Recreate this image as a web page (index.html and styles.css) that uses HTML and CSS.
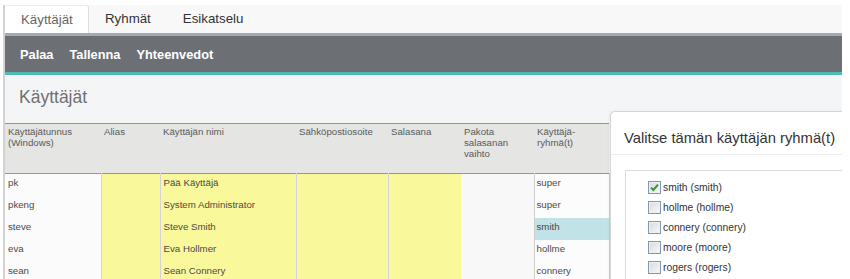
FILE: index.html
```html
<!DOCTYPE html>
<html lang="fi">
<head>
<meta charset="utf-8">
<title>Käyttäjät</title>
<link rel="stylesheet" href="styles.css">
</head>
<body>
<div class="frame">
  <div class="tabs">
    <div class="tab active">Käyttäjät</div>
    <div class="tab">Ryhmät</div>
    <div class="tab">Esikatselu</div>
  </div>
  <div class="toolbar">
    <span class="tool">Palaa</span>
    <span class="tool">Tallenna</span>
    <span class="tool">Yhteenvedot</span>
  </div>
  <div class="content">
    <h1 class="title">Käyttäjät</h1>
    <table class="grid">
      <colgroup>
        <col class="c1"><col class="c2"><col class="c3"><col class="c4"><col class="c5"><col class="c6"><col class="c7">
      </colgroup>
      <thead>
        <tr>
          <th>Käyttäjätunnus (Windows)</th>
          <th>Alias</th>
          <th>Käyttäjän nimi</th>
          <th>Sähköpostiosoite</th>
          <th>Salasana</th>
          <th>Pakota salasanan vaihto</th>
          <th>Käyttäjä-<br>ryhmä(t)</th>
        </tr>
      </thead>
      <tbody>
        <tr><td class="plain">pk</td><td class="edit"></td><td class="edit">Pää Käyttäjä</td><td class="edit"></td><td class="edit"></td><td class="flag"></td><td class="grp">super</td></tr>
        <tr><td class="plain">pkeng</td><td class="edit"></td><td class="edit">System Administrator</td><td class="edit"></td><td class="edit"></td><td class="flag"></td><td class="grp">super</td></tr>
        <tr><td class="plain">steve</td><td class="edit"></td><td class="edit">Steve Smith</td><td class="edit"></td><td class="edit"></td><td class="flag"></td><td class="grp sel">smith</td></tr>
        <tr><td class="plain">eva</td><td class="edit"></td><td class="edit">Eva Hollmer</td><td class="edit"></td><td class="edit"></td><td class="flag"></td><td class="grp">hollme</td></tr>
        <tr><td class="plain">sean</td><td class="edit"></td><td class="edit">Sean Connery</td><td class="edit"></td><td class="edit"></td><td class="flag"></td><td class="grp">connery</td></tr>
      </tbody>
    </table>
  </div>
  <div class="dialog">
    <div class="dialog-head">Valitse tämän käyttäjän ryhmä(t)</div>
    <div class="dialog-body">
      <div class="choices">
        <label class="choice"><span class="box checked"><svg width="11" height="11" viewBox="0 0 11 11"><path d="M2 5.6 L4.4 8 L9 2.6" fill="none" stroke="#2e9c2e" stroke-width="2"/></svg></span>smith (smith)</label>
        <label class="choice"><span class="box"></span>hollme (hollme)</label>
        <label class="choice"><span class="box"></span>connery (connery)</label>
        <label class="choice"><span class="box"></span>moore (moore)</label>
        <label class="choice"><span class="box"></span>rogers (rogers)</label>
      </div>
    </div>
  </div>
</div>
</body>
</html>
```
FILE: styles.css
```css
html, body {
  margin: 0;
  padding: 0;
  background: #ffffff;
}
body {
  font-family: "Liberation Sans", Arial, sans-serif;
  overflow: hidden;
}
.frame {
  position: relative;
  margin: 5px 8px 0 3px;
  width: 837px;
  height: 274px;
  border-left: 2px solid #d3d3d3;
  overflow: hidden;
  background: #f4f5f7;
}
.tabs {
  display: flex;
  height: 28px;
  background: #f8f8f8;
  border-bottom: 3px solid #a2abb3;
}
.tab {
  padding: 0 16px;
  line-height: 28px;
  font-size: 13.3px;
  color: #333;
}
.tab.active {
  width: 84px;
  box-sizing: border-box;
  background: #ffffff;
  color: #666;
  border-right: 1px solid #dedede;
  border-top: 1px solid #ececec;
  border-radius: 3px 3px 0 0;
  line-height: 27px;
}
.toolbar {
  display: flex;
  align-items: center;
  gap: 16px;
  height: 36px;
  padding-left: 15px;
  background: #6c6f74;
  border-bottom: 3px solid #4cbcb4;
}
.tool {
  color: #ffffff;
  font-weight: bold;
  font-size: 12.8px;
}
.content {
  background: #f4f5f7;
}
.title {
  margin: 0;
  padding: 10px 0 14px 14px;
  line-height: 24px;
  font-size: 17.5px;
  font-weight: normal;
  color: #707070;
}
.grid {
  border-collapse: collapse;
  table-layout: fixed;
  width: 604px;
  font-size: 9.7px;
}
.c1 { width: 96px; }
.c2 { width: 59px; }
.c3 { width: 136px; }
.c4 { width: 92px; }
.c5 { width: 73px; }
.c6 { width: 73px; }
.c7 { width: 75px; }
.grid thead tr {
  background: #e5e5e3;
  border-top: 1px solid #7f9dac;
  border-bottom: 1px solid #7f9dac;
}
.grid th {
  height: 50px;
  box-sizing: border-box;
  padding: 2px 3px;
  vertical-align: top;
  text-align: left;
  font-weight: normal;
  color: #5a5a5a;
  line-height: 11px;
}
.grid td {
  height: 22px;
  box-sizing: border-box;
  padding: 2px 3px;
  vertical-align: top;
  line-height: 13px;
  color: #4a4a4a;
}
.grid td.plain {
  background: #fbfbfb;
}
.grid td.edit {
  background: #f9f99c;
  border-left: 1px solid #d4d2dc;
}
.grid td.flag {
  background: #f8f8f8;
}
.grid td.grp {
  background: #fcfcfc;
  border-left: 1px solid #cfcfcf;
  border-right: 1px solid #cfcfcf;
  padding-left: 2px;
}
.grid td.grp.sel {
  background: #c1e2e7;
}
.dialog {
  position: absolute;
  left: 605px;
  top: 106px;
  right: -4px;
  bottom: -10px;
  background: #ffffff;
  border: 1px solid #d6d6d6;
  border-radius: 5px 0 0 0;
  box-shadow: -1px 0 3px rgba(0, 0, 0, 0.06);
}
.dialog-head {
  padding: 16px 0 6px 13px;
  line-height: 20px;
  font-size: 14.8px;
  color: #333;
  border-bottom: 1px solid #eeeeee;
}
.dialog-body {
  padding: 15px 0 0 14px;
}
.choices {
  border: 1px solid #dddddd;
  border-right: none;
  padding: 10px 0 10px 22px;
  display: flex;
  flex-direction: column;
  gap: 7px;
}
.choice {
  display: flex;
  align-items: center;
  gap: 2px;
  height: 13px;
  font-size: 10.3px;
  color: #333;
}
.box {
  box-sizing: border-box;
  width: 13px;
  height: 13px;
  border: 1px solid #8597aa;
  background: linear-gradient(135deg, #d5d9de, #f8f8f8);
  box-shadow: inset 0 0 0 1px #eef0f2;
  display: flex;
  align-items: center;
  justify-content: center;
}
.box svg {
  display: block;
}
```
